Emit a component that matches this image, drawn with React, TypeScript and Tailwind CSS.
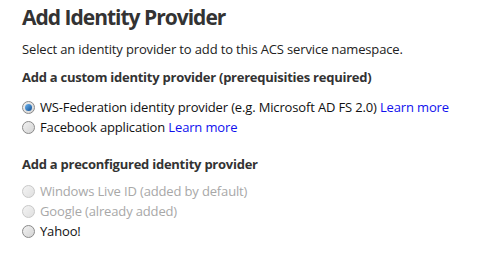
const font = { fontFamily: '"Open Sans", "Noto Sans", sans-serif' };

function Radio({ checked, disabled }: { checked?: boolean; disabled?: boolean }) {
	return (
		<span
			className={`flex h-[13px] w-[13px] shrink-0 items-center justify-center rounded-full border ${
				disabled
					? "border-[#c8c8c8] bg-gradient-to-br from-[#f4f4f4] to-[#e0e0e0]"
					: "border-[#8a8a8a] bg-gradient-to-br from-[#f2f2f2] to-[#d4d4d4]"
			}`}
		>
			{checked && (
				<span className="h-[7px] w-[7px] rounded-full bg-gradient-to-br from-[#6fb6f0] to-[#0b4f94]" />
			)}
		</span>
	);
}

function Option({
	label,
	link,
	checked,
	disabled,
}: {
	label: string;
	link?: boolean;
	checked?: boolean;
	disabled?: boolean;
}) {
	return (
		<label className="flex h-[20px] items-center gap-[5px] tracking-[-0.15px]">
			<Radio checked={checked} disabled={disabled} />
			<span className={disabled ? "text-[#a8a8a8]" : "text-[#111]"}>
				{label}
				{link && <span className="text-[#1010ee]"> Learn more</span>}
			</span>
		</label>
	);
}

export default function App() {
	return (
		<div className="h-[261px] w-[484px] bg-white pl-[22px] pt-[3px] text-[13px] leading-[20px]" style={font}>
			<h1 className="text-[21px] font-bold leading-[28px] tracking-[-1px] text-[#333]">Add Identity Provider</h1>
			<p className="mt-[8px] tracking-[-0.15px] text-[#222]">
				Select an identity provider to add to this ACS service namespace.
			</p>

			<h2 className="mt-[8px] font-bold tracking-[-0.25px] text-[#333]">
				Add a custom identity provider (prerequisities required)
			</h2>
			<div className="mt-[10px]">
				<Option label="WS-Federation identity provider (e.g. Microsoft AD FS 2.0)" link checked />
				<Option label="Facebook application" link />
			</div>

			<h2 className="mt-[17px] font-bold tracking-[-0.25px] text-[#333]">Add a preconfigured identity provider</h2>
			<div className="mt-[7px]">
				<Option label="Windows Live ID (added by default)" disabled />
				<Option label="Google (already added)" disabled />
				<Option label="Yahoo!" />
			</div>
		</div>
	);
}
